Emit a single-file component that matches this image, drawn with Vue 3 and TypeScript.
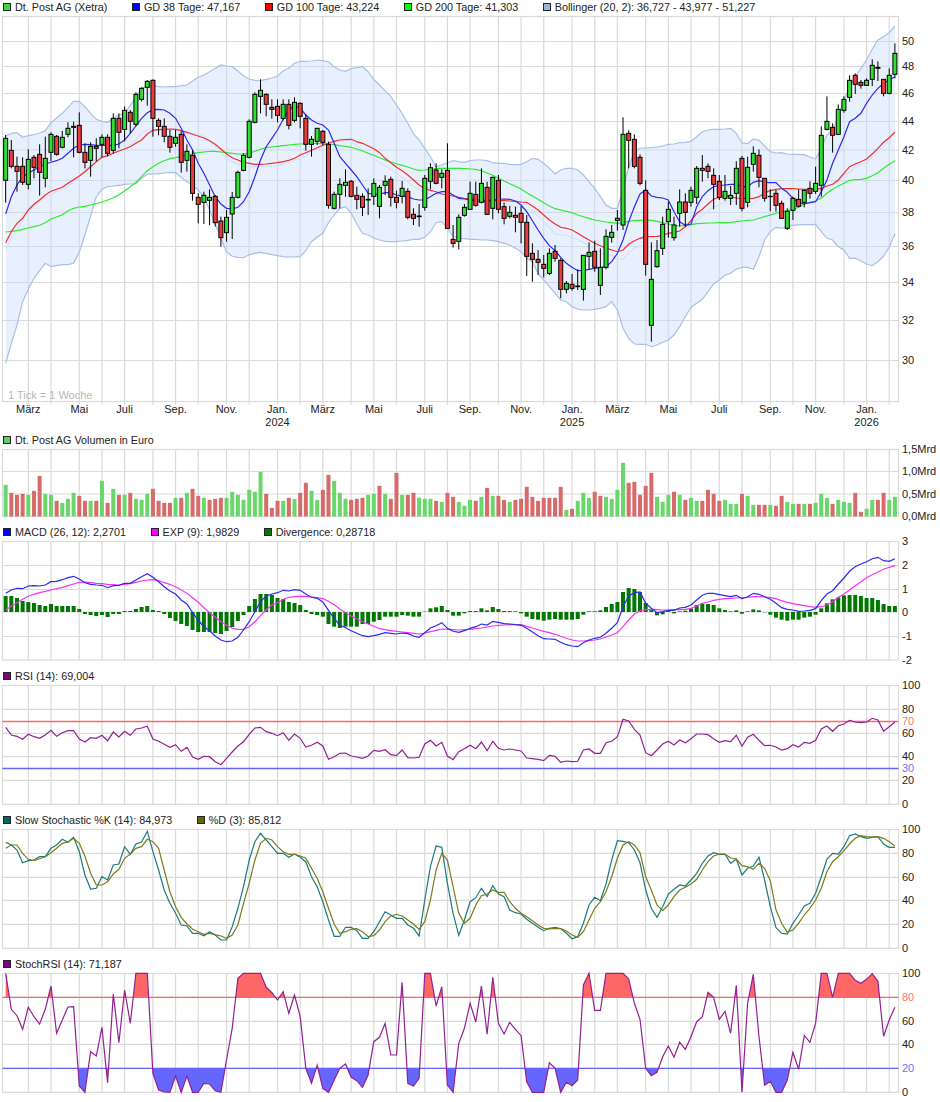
<script setup lang="ts">
// values are read in thirds of a pixel, counted from a base line on the page
interface Line { d: string; color: string; width?: number }
interface Area { d: string; color: string; opacity?: number; clipY?: number; clipH?: number }
interface Bar { x: number; y: number; h: number; color: string }
interface Label { y: number; text: string; color?: string }
interface LegendItem { color: string; text: string }
interface Panel {
  id: string
  top: number
  height: number
  bottom: number
  legend: LegendItem[]
  hLines: number[]
  labels: Label[]
  lines: Line[]
  areas: Area[]
  bars: Bar[]
}
type Candle = [number, number, number, number, number]

const X0 = 5.65
const STEP = 5.664
const LEFT = 2.5
const RIGHT = 898.5

const px = (i: number) => X0 + STEP * i
const y3 = (base: number, values: number[]) => values.map((v) => base + v / 3)
const linePath = (ys: number[]) =>
  ys.map((y, i) => `${i ? "L" : "M"}${px(i).toFixed(1)} ${y.toFixed(1)}`).join(" ")

const tickIdx = [
  4, 8, 13, 17, 21, 26, 30, 34, 39, 43, 48, 52, 56, 61, 65, 69, 74, 78, 82, 87, 91, 95, 100, 104, 108,
  113, 117, 121, 126, 130, 135, 139, 143, 148, 152, 156,
]
const ticks = tickIdx.map(px)

const months = [
  { i: 4, text: "März" }, { i: 13, text: "Mai" }, { i: 21, text: "Juli" }, { i: 30, text: "Sep." },
  { i: 39, text: "Nov." }, { i: 48, text: "Jan.", year: "2024" }, { i: 56, text: "März" },
  { i: 65, text: "Mai" }, { i: 74, text: "Juli" }, { i: 82, text: "Sep." }, { i: 91, text: "Nov." },
  { i: 100, text: "Jan.", year: "2025" }, { i: 108, text: "März" }, { i: 117, text: "Mai" },
  { i: 126, text: "Juli" }, { i: 135, text: "Sep." }, { i: 143, text: "Nov." },
  { i: 152, text: "Jan.", year: "2026" },
]

// high, body top, body bottom, low, 1 = up week
const candles: Candle[] = [
  [405,415,541,608,1],[420,451,499,505,0],[470,499,514,575,0],[472,499,547,555,0],[448,478,553,568,1],
  [465,472,502,535,0],[433,463,517,587,0],[410,475,535,562,1],[397,403,457,483,1],[405,409,463,467,0],
  [393,412,442,445,1],[367,385,403,412,1],[365,379,382,472,0],[337,376,457,460,0],[430,457,487,505,0],
  [427,439,481,530,1],[415,439,445,484,0],[403,412,433,472,1],[403,412,460,469,0],[340,355,451,460,1],
  [340,355,397,445,0],[319,331,388,424,1],[330,337,364,400,0],[277,283,373,379,1],[262,265,298,304,1],
  [240,244,262,317,1],[238,241,355,410,0],[355,361,379,406,0],[355,379,409,427,0],[390,409,442,458,0],
  [390,412,430,440,1],[394,403,487,518,0],[433,454,481,515,1],[450,466,580,602,0],[580,592,613,670,0],
  [575,586,607,672,1],[568,592,601,675,1],[585,589,668,680,0],[650,663,713,740,0],[630,652,698,725,1],
  [576,592,642,717,1],[512,517,592,595,1],[460,466,511,514,1],[358,364,472,475,1],[277,283,367,370,1],
  [238,271,289,340,1],[280,283,313,349,0],[298,322,328,356,0],[298,319,346,367,0],[298,313,355,361,1],
  [298,313,376,388,0],[292,307,361,367,1],[307,310,349,385,0],[343,355,433,452,0],[408,418,433,470,1],
  [385,385,424,435,1],[390,394,427,436,0],[425,433,616,626,0],[575,583,625,628,1],[535,553,583,625,1],
  [508,547,556,590,1],[540,544,589,592,0],[560,586,598,628,0],[580,589,622,648,0],[565,598,600,645,0],
  [535,550,589,615,1],[555,562,619,655,1],[526,544,556,585,1],[530,538,592,620,0],[572,592,607,625,0],
  [543,565,589,610,1],[565,574,652,658,0],[625,643,655,675,0],[612,648,650,680,0],[525,535,622,632,1],
  [490,503,544,568,1],[490,510,550,553,0],[508,520,532,565,1],[430,511,685,685,0],[675,718,730,743,0],
  [643,652,724,748,1],[612,622,646,650,1],[545,580,628,628,1],[545,583,616,620,0],[505,550,607,610,1],
  [545,562,643,645,0],[530,532,625,658,1],[525,541,628,640,0],[608,620,655,673,0],[618,637,649,655,1],
  [620,646,652,697,0],[618,640,667,730,0],[645,667,769,828,0],[730,760,778,845,0],[750,778,787,825,0],
  [765,793,805,832,0],[745,760,820,825,1],[735,754,775,785,0],[775,781,868,895,0],[843,850,868,880,1],
  [822,853,865,872,0],[808,858,860,870,0],[765,766,868,902,1],[727,757,769,808,1],[722,754,802,815,0],
  [745,802,856,885,1],[688,709,802,808,1],[675,697,712,728,1],[630,655,661,692,1],[352,403,675,690,1],
  [391,400,421,505,0],[403,418,499,505,0],[463,472,550,556,0],[541,571,793,827,0],[727,838,976,1025,1],
  [720,752,800,803,1],[650,673,745,765,1],[605,628,665,713,1],[650,675,713,722,1],[568,606,640,680,1],
  [580,606,637,680,0],[560,571,607,620,1],[498,505,592,612,1],[465,505,511,545,1],[490,499,514,535,0],
  [505,526,553,628,0],[525,544,592,600,0],[525,574,595,602,1],[558,586,595,615,1],[484,505,580,615,1],
  [468,475,625,634,0],[470,502,607,622,1],[439,460,493,515,1],[448,466,532,562,0],[535,535,595,605,0],
  [568,589,590,634,0],[570,580,616,635,0],[602,610,655,656,0],[625,634,685,690,1],[590,595,631,660,1],
  [568,598,619,622,0],[568,571,607,622,1],[544,565,580,596,0],[500,550,574,582,1],[379,406,556,590,1],
  [289,364,388,391,1],[370,382,406,458,0],[313,328,403,405,1],[289,298,331,338,1],[226,241,292,305,1],
  [220,226,253,282,0],[240,247,256,266,0],[235,241,256,258,1],[178,196,238,258,1],[184,202,205,243,0],
  [238,238,280,289,0],[205,226,280,283,1],[130,160,223,235,1],
]

const upper = y3(0, [
  408,400,398,412,407,404,399,392,368,354,340,322,304,304,320,340,358,364,367,354,345,340,316,290,265,258,255,260,
  261,260,260,257,255,243,232,225,215,205,195,198,200,213,228,237,241,242,238,234,228,212,205,190,184,184,183,180,
  182,185,200,210,214,206,203,200,215,238,255,272,290,315,340,370,402,420,445,470,500,495,488,482,485,487,482,480,
  480,482,488,490,490,493,494,493,485,475,478,490,505,522,510,505,505,510,525,545,565,590,615,625,625,570,500,455,
  444,444,443,441,438,433,432,428,427,424,410,395,390,388,388,387,385,400,429,431,417,421,438,455,459,458,462,463,
  463,464,471,477,445,405,390,350,300,260,230,205,180,148,120,110,98,78,
])
const lower = y3(0, [
  1090,1030,975,905,868,835,812,790,800,797,794,794,790,757,705,648,590,568,560,558,556,553,552,552,535,523,522,521,
  519,517,518,532,545,555,570,590,630,672,715,755,769,772,773,764,760,757,760,764,767,770,771,771,770,752,725,712,
  700,668,645,625,620,640,672,700,705,714,720,724,725,725,723,721,718,718,712,695,668,665,685,708,715,716,718,718,
  720,720,722,725,730,735,745,755,775,785,820,840,860,880,900,905,920,927,930,930,928,925,920,905,930,985,1015,1032,
  1033,1033,1040,1035,1027,1020,1005,980,950,922,910,898,875,852,840,826,820,808,802,802,808,770,720,695,682,685,
  680,676,674,674,674,673,695,715,720,740,750,775,775,783,792,797,785,768,742,702,
])
const middle = upper.map((v, i) => (v + lower[i]) / 2)

const gd38 = y3(0, [
  642,590,555,530,520,510,500,492,487,482,475,460,445,435,433,434,436,436,436,436,432,420,400,378,355,338,329,328,
  330,340,355,385,420,450,490,520,555,590,612,625,627,622,605,575,530,480,440,415,390,358,330,318,325,345,360,370,
  375,390,430,470,490,510,530,555,580,583,583,578,578,585,588,590,597,600,600,590,580,575,575,585,595,597,600,603,
  604,605,600,598,597,598,603,615,635,662,690,715,737,752,772,790,802,812,811,808,805,803,800,785,760,720,665,620,
  582,570,588,592,594,600,635,665,676,672,620,590,572,560,556,555,553,553,560,560,547,542,547,548,548,565,577,595,
  608,612,608,605,575,540,490,450,410,365,355,340,310,285,265,250,240,230,
])
const gd100 = y3(0, [
  728,695,670,655,630,613,600,585,574,568,562,550,539,528,515,500,485,472,467,460,453,447,440,430,420,402,391,389,
  388,387,388,392,397,403,408,414,422,433,447,462,473,480,487,490,493,493,492,490,488,485,481,475,465,458,451,443,
  436,430,424,420,419,418,425,430,438,446,458,475,488,502,512,525,540,555,566,571,575,582,585,588,592,595,597,599,
  600,601,601,602,602,603,604,606,607,618,630,645,660,672,682,685,690,700,710,720,730,737,745,750,755,750,733,722,
  715,710,710,709,706,700,697,693,680,662,640,628,612,598,592,587,590,594,595,596,595,590,578,572,568,566,566,566,
  567,568,568,568,565,558,553,540,520,500,492,485,477,462,445,427,413,397,
])
const gd200 = y3(0, [
  696,694,692,688,684,680,676,668,657,651,644,632,625,621,619,615,611,606,600,593,584,573,560,547,530,512,500,490,
  482,476,473,469,465,461,458,456,454,454,456,458,460,462,462,460,454,448,443,441,439,437,435,433,432,431,430,430,
  431,432,434,437,439,442,447,453,460,466,473,480,486,491,496,501,507,511,510,508,506,505,505,505,505,506,507,508,
  512,519,526,534,543,551,559,567,578,588,598,608,618,626,630,634,638,645,650,655,660,663,666,668,670,668,664,662,
  661,660,661,664,668,672,676,678,677,674,671,670,669,669,668,668,667,665,663,661,660,655,650,645,640,635,632,628,
  622,612,607,603,595,580,568,558,550,541,539,538,535,527,518,505,493,482,
])

// bar heights, red weeks negative
const volume = [
  95,-71,-65,-68,65,-77,-122,68,65,-47,41,53,71,-62,-47,47,-47,107,-41,83,-65,65,-71,53,50,68,-83,-47,-41,-41,56,-56,71,
  -83,-62,56,-50,-53,-56,56,74,65,50,80,74,134,-68,-26,-47,47,-56,53,-71,-101,77,50,
  -80,-125,107,71,53,-50,-53,-56,65,68,-92,68,-53,-131,65,-65,-71,56,53,53,-47,44,-71,-59,44,32,50,-47,59,-86,62,-62,-50,
  44,-50,-53,-89,-59,-47,-56,-56,-56,-89,20,-23,47,71,56,-74,-62,59,53,80,
  161,-101,-104,-65,-92,-131,59,44,65,-74,65,-50,56,47,-47,-80,-68,-47,50,38,38,-68,62,35,-35,-35,35,-32,-62,44,38,-38,38,
  -38,41,68,56,-38,50,44,41,-71,-14,23,50,-50,-71,50,59,
]

const macdLine = [
  ...y3(430, [
    490,480,475,476,468,467,468,465,455,454,449,443,439,447,458,463,465,466,473,467,466,460,460,450,440,431,442,455,
    470,483,492,510,522,548,570,590,602,618,630,635,633,622,600,575,545,515,498,492,488,481,483,479,481,492,502,505,
  ]),
  ...y3(440, [
    486,511,536,555,563,572,580,587,590,587,583,578,580,582,579,581,588,592,578,564,557,548,565,574,577,572,565,560,
    552,555,544,547,551,552,554,556,565,576,587,596,597,598,607,614,618,620,608,600,595,592,580,565,548,500,468,458,
    456,490,505,518,515,511,511,504,502,495,480,466,460,460,464,467,470,466,476,470,460,463,470,478,490,503,508,510,
    514,513,511,506,482,462,452,432,414,394,380,372,365,356,352,362,364,356,
  ]),
]
const macdExp = [
  ...y3(430, [
    540,528,518,508,499,493,488,484,480,476,472,467,462,457,456,458,460,461,463,464,465,463,461,457,453,450,449,452,
    458,463,470,480,490,503,517,533,548,562,575,585,595,598,598,590,575,557,540,525,518,508,502,500,499,499,501,503,
  ]),
  ...y3(440, [
    476,484,494,507,518,528,537,545,552,559,566,569,572,574,576,578,580,582,579,575,571,567,568,569,570,569,568,566,
    564,561,558,556,555,554,554,554,559,564,569,574,578,583,589,595,600,603,603,602,600,597,591,585,578,560,540,522,
    512,509,508,509,510,510,509,509,508,505,498,490,486,481,478,476,475,474,473,472,470,470,471,473,476,482,487,491,
    494,497,500,502,500,495,486,472,462,450,437,425,413,404,396,388,382,377,
  ]),
]
const macdDiv = [
  ...y3(430, [
    498,498,504,513,516,519,525,528,522,528,528,528,528,537,552,555,558,555,561,552,552,543,543,537,531,528,540,543,
    552,564,573,582,588,600,606,606,606,609,612,603,591,573,555,528,507,492,492,495,504,507,516,519,525,540,552,555,
  ]),
  ...y3(440, [
    530,552,560,564,560,560,560,552,552,545,540,530,530,530,525,527,530,530,515,505,502,498,510,527,527,520,513,513,
    505,511,501,507,513,513,514,520,530,537,539,542,539,537,539,539,539,537,524,514,514,511,501,492,486,456,444,447,
    456,489,510,526,523,512,520,514,512,505,495,492,492,495,505,510,514,511,521,514,508,511,517,524,533,539,542,539,
    539,533,530,524,505,490,478,472,466,465,465,468,474,474,480,492,498,498,
  ]),
]

const rsi = [
  ...y3(670, [
    172,195,199,208,193,200,205,195,181,199,188,182,182,207,216,203,205,196,212,186,201,184,196,177,174,169,207,214,
    223,232,224,244,232,261,268,259,260,275,284,265,246,228,215,193,174,172,185,190,197,188,211,192,205,231,226,217,
    228,268,260,250,249,258,261,265,258,241,244,239,254,257,240,263,264,262,222,211,228,217,258,269,245,236,226,236,
    216,242,214,235,240,237,240,243,264,266,268,272,256,259,277,273,275,274,240,237,250,250,218,214,200,148,153,178,195,
  ]),
  ...y3(660, [
    278,287,270,252,244,255,240,248,236,222,222,224,236,247,242,245,226,258,232,223,241,257,256,261,270,266,254,261,
    247,250,241,207,198,214,197,192,181,186,188,186,175,180,214,200,186,
  ]),
]
const stochK = y3(670, [
  517,525,540,578,572,570,560,560,535,525,508,517,502,545,615,657,655,620,630,585,582,530,553,522,516,484,545,600,
  660,700,730,765,768,790,790,797,785,795,810,810,770,715,650,570,515,490,510,530,550,550,562,552,562,575,620,650,
  695,750,799,799,772,772,782,805,805,785,755,725,735,745,745,765,775,798,690,590,528,532,640,730,796,750,695,683,
  655,680,647,672,680,720,728,732,748,760,772,782,775,772,776,790,806,800,760,705,682,692,642,570,512,514,518,540,
  578,660,715,742,710,672,658,645,648,630,610,580,558,548,553,553,580,567,615,595,588,562,630,710,773,790,792,760,
  735,708,700,670,620,568,550,552,530,497,492,500,505,502,500,522,532,532,
])
const stochD = y3(670, [
  535,525,525,550,568,572,566,560,548,535,520,516,505,520,558,610,645,645,635,612,598,565,552,535,530,508,515,535,
  600,665,710,742,762,778,785,793,790,794,798,805,795,765,700,640,570,520,505,510,530,545,553,553,558,565,595,625,
  665,715,763,790,785,778,776,785,800,797,780,755,738,733,738,750,762,778,755,690,600,550,570,650,730,760,745,705,
  677,672,660,667,667,695,715,730,740,752,765,775,777,775,776,783,795,802,785,750,715,695,665,620,565,525,515,525,
  548,620,660,705,722,705,680,660,652,642,628,600,575,558,552,552,564,567,587,590,598,580,595,632,720,760,787,780,
  760,735,715,690,655,605,575,560,542,522,505,497,500,501,500,505,515,528,
])
const stochRsi = y3(670, [
  910,1018,1037,1078,1012,1040,1062,1018,948,1090,1050,1011,1010,1248,1267,1145,1158,1072,1238,972,1118,960,1060,910,
  910,910,1210,1260,1266,1267,1218,1267,1218,1267,1267,1240,1242,1262,1267,1170,1075,925,910,910,910,910,952,968,990,
  965,1030,975,1040,1195,1240,1186,1255,1267,1230,1195,1182,1222,1232,1252,1215,1115,1102,1060,1155,1155,937,1240,1248,
  1225,910,910,1008,950,1245,1267,1120,1075,1000,1056,948,1093,922,1060,1092,1057,1078,1097,1235,1267,1267,1267,1178,
  1195,1267,1237,1247,1230,945,910,1021,1021,910,910,910,910,927,1000,1048,1195,1217,1207,1160,1128,1162,1117,1138,1100,
  1055,1041,967,982,1048,1024,1090,946,1267,1000,913,1100,1246,1234,1267,1267,1230,1147,1198,1096,1117,1060,910,910,982,
  910,910,910,931,940,928,911,934,1099,1050,1012,
])

const BAR_W = 4
const bandPath = (hi: number[], lo: number[]) =>
  linePath(hi) + " " + lo.map((y, i) => `L${px(i).toFixed(1)} ${y.toFixed(1)}`).reverse().join(" ") + " Z"
const closedTo = (ys: number[], level: number) =>
  `${linePath(ys)} L${px(ys.length - 1).toFixed(1)} ${level} L${px(0).toFixed(1)} ${level} Z`
const hLine = (y: number, color: string): Line => ({ d: `M${LEFT} ${y} L${RIGHT} ${y}`, color, width: 1.3 })

const volBottom = 516.5
const macdZero = 612

const panels: Panel[] = [
  {
    id: "main",
    top: 16,
    height: 417,
    bottom: 401.5,
    legend: [
      { color: "#33dd33", text: "Dt. Post AG (Xetra)" },
      { color: "#0000ff", text: "GD 38 Tage: 47,167" },
      { color: "#ff0000", text: "GD 100 Tage: 43,224" },
      { color: "#00ff00", text: "GD 200 Tage: 41,303" },
      { color: "#99b3dd", text: "Bollinger (20, 2): 36,727 - 43,977 - 51,227" },
    ],
    hLines: [41.5, 66.5, 93.5, 121.5, 150, 180.5, 212.5, 246.5, 282.5, 320.5, 360.5],
    labels: [
      { y: 41.5, text: "50" }, { y: 66.5, text: "48" }, { y: 93.5, text: "46" }, { y: 121.5, text: "44" },
      { y: 150, text: "42" }, { y: 180.5, text: "40" }, { y: 212.5, text: "38" }, { y: 246.5, text: "36" },
      { y: 282.5, text: "34" }, { y: 320.5, text: "32" }, { y: 360.5, text: "30" },
    ],
    areas: [{ d: bandPath(upper, lower), color: "#c9dbfa", opacity: 0.42 }],
    bars: [],
    lines: [
      { d: linePath(upper), color: "#a9bfe8" },
      { d: linePath(lower), color: "#a9bfe8" },
      { d: linePath(middle), color: "#d3e2f8" },
      { d: linePath(gd200), color: "#2cec2c" },
      { d: linePath(gd100), color: "#f03030" },
      { d: linePath(gd38), color: "#2a2af0" },
    ],
  },
  {
    id: "vol",
    top: 449,
    height: 76,
    bottom: volBottom,
    legend: [{ color: "#66cc66", text: "Dt. Post AG Volumen in Euro" }],
    hLines: [471.5, 494],
    labels: [
      { y: 449.5, text: "1,5Mrd" }, { y: 471.5, text: "1,0Mrd" }, { y: 494, text: "0,5Mrd" }, { y: 516.5, text: "0,0Mrd" },
    ],
    areas: [],
    bars: volume.map((v, i) => ({
      x: px(i) - BAR_W / 2,
      y: volBottom - Math.abs(v) / 3,
      h: Math.abs(v) / 3,
      color: v > 0 ? "#69d769" : "#d96a6a",
    })),
    lines: [],
  },
  {
    id: "macd",
    top: 541,
    height: 128,
    bottom: 660,
    legend: [
      { color: "#0000ff", text: "MACD (26, 12): 2,2701" },
      { color: "#ff00ff", text: "EXP (9): 1,9829" },
      { color: "#007700", text: "Divergence: 0,28718" },
    ],
    hLines: [565.5, 589.5, 612, 636.5],
    labels: [
      { y: 541.5, text: "3" }, { y: 565.5, text: "2" }, { y: 589.5, text: "1" }, { y: 612, text: "0" },
      { y: 636.5, text: "-1" }, { y: 660, text: "-2" },
    ],
    areas: [],
    bars: macdDiv.map((y, i) => ({
      x: px(i) - BAR_W / 2,
      y: Math.min(y, macdZero),
      h: Math.abs(y - macdZero),
      color: "#007700",
    })),
    lines: [
      { d: linePath(macdExp), color: "#f533f5" },
      { d: linePath(macdLine), color: "#2a2af0" },
    ],
  },
  {
    id: "rsi",
    top: 685,
    height: 128,
    bottom: 804.3,
    legend: [{ color: "#800080", text: "RSI (14): 69,004" }],
    hLines: [709.3, 733.3, 756.7, 780.3],
    labels: [
      { y: 685.5, text: "100" }, { y: 709.3, text: "80" }, { y: 721.5, text: "70", color: "#ff6f6f" },
      { y: 733.3, text: "60" }, { y: 756.7, text: "40" }, { y: 768.5, text: "30", color: "#7070ff" },
      { y: 780.3, text: "20" }, { y: 804.3, text: "0" },
    ],
    areas: [],
    bars: [],
    lines: [
      hLine(721.5, "#ff6666"),
      hLine(768.5, "#6666ff"),
      { d: linePath(rsi), color: "#922092" },
    ],
  },
  {
    id: "stoch",
    top: 829,
    height: 128,
    bottom: 948.3,
    legend: [
      { color: "#006666", text: "Slow Stochastic %K (14): 84,973" },
      { color: "#666600", text: "%D (3): 85,812" },
    ],
    hLines: [853.3, 877.3, 900.3, 924.3],
    labels: [
      { y: 829.5, text: "100" }, { y: 853.3, text: "80" }, { y: 877.3, text: "60" }, { y: 900.3, text: "40" },
      { y: 924.3, text: "20" }, { y: 948.3, text: "0" },
    ],
    areas: [],
    bars: [],
    lines: [
      { d: linePath(stochK), color: "#1c7b7b" },
      { d: linePath(stochD), color: "#7b7b1c" },
    ],
  },
  {
    id: "srsi",
    top: 973,
    height: 128,
    bottom: 1092.3,
    legend: [{ color: "#800080", text: "StochRSI (14): 71,187" }],
    hLines: [997.3, 1021.3, 1044.3, 1068.3],
    labels: [
      { y: 973.5, text: "100" }, { y: 997.3, text: "80", color: "#ff6f6f" }, { y: 1021.3, text: "60" },
      { y: 1044.3, text: "40" }, { y: 1068.3, text: "20", color: "#7070ff" }, { y: 1092.3, text: "0" },
    ],
    areas: [
      { d: closedTo(stochRsi, 997.3), color: "#ff6666", clipY: 973, clipH: 24.3 },
      { d: closedTo(stochRsi, 1068.3), color: "#6666ff", clipY: 1068.3, clipH: 25 },
    ],
    bars: [],
    lines: [
      hLine(997.3, "#ff6666"),
      hLine(1068.3, "#6666ff"),
      { d: linePath(stochRsi), color: "#922092" },
    ],
  },
]
</script>

<template>
  <div class="chart">
    <section v-for="p in panels" :key="p.id" class="panel">
      <div class="legend">
        <span v-for="item in p.legend" :key="item.text" class="legend-item">
          <i class="swatch" :style="{ background: item.color }"></i>{{ item.text }}
        </span>
      </div>
      <svg class="plot" width="940" :height="p.height" :viewBox="`0 ${p.top} 940 ${p.height}`">
        <defs>
          <template v-for="(a, n) in p.areas" :key="n">
            <clipPath v-if="a.clipY" :id="`${p.id}-clip-${n}`">
              <rect :x="LEFT" :y="a.clipY" :width="RIGHT - LEFT" :height="a.clipH" />
            </clipPath>
          </template>
        </defs>

        <g class="grid">
          <line v-for="y in p.hLines" :key="y" :x1="LEFT" :x2="RIGHT" :y1="y" :y2="y" />
          <line
            v-for="x in ticks"
            :key="x"
            :x1="x"
            :x2="x"
            :y1="p.top + 0.5"
            :y2="p.id === 'main' ? p.bottom + 3 : p.bottom"
          />
          <rect :x="LEFT" :y="p.top + 0.5" :width="RIGHT - LEFT" :height="p.bottom - p.top - 0.5" fill="none" />
        </g>

        <path
          v-for="(a, n) in p.areas"
          :key="n"
          :d="a.d"
          :fill="a.color"
          :fill-opacity="a.opacity ?? 1"
          :clip-path="a.clipY ? `url(#${p.id}-clip-${n})` : undefined"
        />

        <rect
          v-for="(b, n) in p.bars"
          :key="n"
          :x="b.x"
          :y="b.y"
          :width="BAR_W"
          :height="b.h"
          :fill="b.color"
        />

        <path v-for="(l, n) in p.lines" :key="n" :d="l.d" :stroke="l.color" :stroke-width="l.width ?? 1.2" fill="none" />

        <g v-if="p.id === 'main'">
          <g v-for="(c, i) in candles" :key="i">
            <line class="wick" :x1="px(i)" :x2="px(i)" :y1="c[0] / 3" :y2="c[3] / 3" />
            <rect
              class="body"
              :x="px(i) - 2"
              :y="c[1] / 3"
              width="4"
              :height="(c[2] - c[1]) / 3"
              :fill="c[4] ? '#2fe02f' : '#ee3a3a'"
            />
          </g>
          <text class="tick-note" x="8" y="399">1 Tick = 1 Woche</text>
          <g v-for="m in months" :key="m.i">
            <text class="axis-x" :x="px(m.i)" y="413">{{ m.text }}</text>
            <text v-if="m.year" class="axis-x" :x="px(m.i)" y="426">{{ m.year }}</text>
          </g>
        </g>

        <text
          v-for="l in p.labels"
          :key="l.text"
          class="axis-y"
          x="902"
          :y="l.y + 3.5"
          :fill="l.color ?? '#222'"
        >{{ l.text }}</text>
      </svg>
    </section>
  </div>
</template>

<style scoped>
.chart {
  width: 940px;
  height: 1102px;
  background: #fff;
  overflow: hidden;
  font-family: "Liberation Sans", Arial, sans-serif;
  font-size: 10.8px;
  color: #222;
}

.legend {
  display: flex;
  gap: 24.5px;
  height: 14px;
  margin-bottom: 2px;
  padding-left: 3px;
  line-height: 13px;
  white-space: nowrap;
}

.legend-item {
  display: flex;
  align-items: center;
  gap: 4px;
}

.swatch {
  width: 8px;
  height: 8px;
  box-sizing: border-box;
  border: 1px solid #222;
}

.plot {
  display: block;
  overflow: visible;
}

.grid line,
.grid rect {
  stroke: #dadada;
  stroke-width: 1.2;
}

.wick {
  stroke: #000;
  stroke-width: 1;
}

.body {
  stroke: #000;
  stroke-width: 1;
}

text {
  font-family: "Liberation Sans", Arial, sans-serif;
  font-size: 11px;
}

.axis-x {
  text-anchor: middle;
  fill: #222;
}

.tick-note {
  fill: #b9b9b9;
}
</style>
